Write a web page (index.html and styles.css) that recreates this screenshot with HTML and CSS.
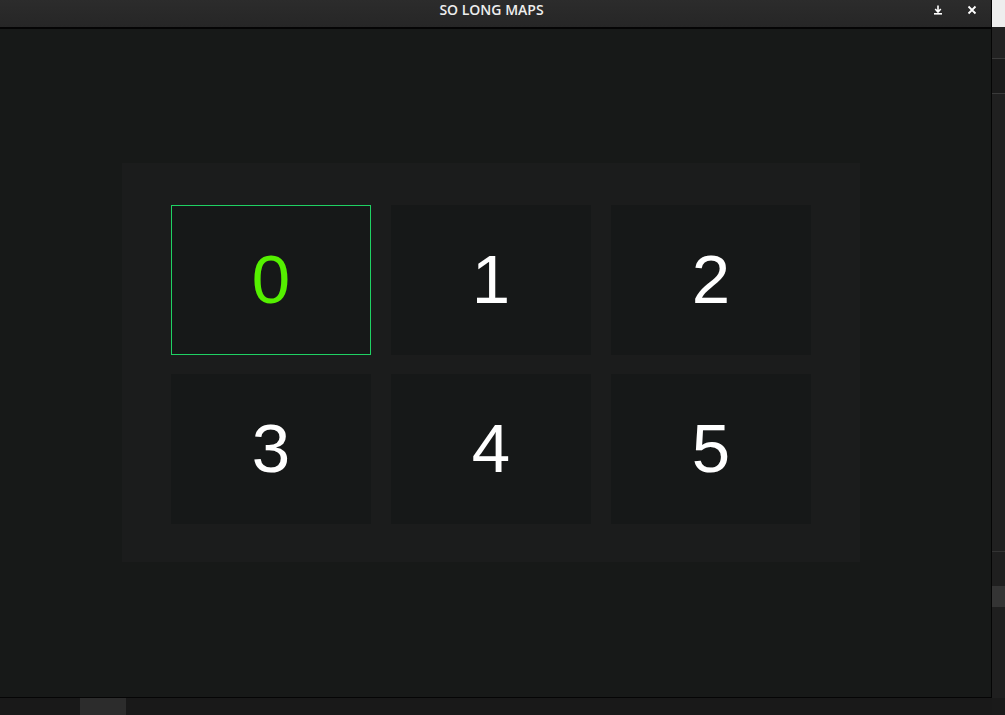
FILE: index.html
```html
<!DOCTYPE html>
<html>
<head>
<meta charset="utf-8">
<title>SO LONG MAPS</title>
<link rel="stylesheet" href="styles.css">
</head>
<body>
<div class="desktop">
  <div class="window">
    <div class="titlebar">
      <div class="title">SO LONG MAPS</div>
      <div class="controls">
        <svg class="ctl" width="10" height="10" viewBox="0 0 10 10"><path d="M5 0.5V6.5M2.2 4L5 7 7.8 4" fill="none" stroke="#fff" stroke-width="1.6"/><rect x="1" y="8" width="8" height="1.6" fill="#fff"/></svg>
        <svg class="ctl" width="10" height="10" viewBox="0 0 10 10"><path d="M1.5 1.5L8.5 8.5M8.5 1.5L1.5 8.5" stroke="#fff" stroke-width="1.8"/></svg>
      </div>
    </div>
    <div class="content">
      <div class="panel">
        <div class="cell selected">0</div>
        <div class="cell">1</div>
        <div class="cell">2</div>
        <div class="cell">3</div>
        <div class="cell">4</div>
        <div class="cell">5</div>
      </div>
    </div>
  </div>
  <div class="side">
    <div class="side-top"></div>
    <div class="side-a"></div>
    <div class="side-b"></div>
    <div class="side-c"></div>
    <div class="side-d"></div>
    <div class="side-e"></div>
  </div>
  <div class="bottom">
    <div class="bottom-tab"></div>
  </div>
  <div class="corner"></div>
</div>
</body>
</html>
```

FILE: styles.css
```css
html, body {
  margin: 0;
  padding: 0;
  background: #1a1a1a;
}
.desktop {
  width: 1005px;
  height: 715px;
  overflow: hidden;
  display: grid;
  grid-template-columns: 992px 13px;
  grid-template-rows: 698px 17px;
}
.window {
  display: flex;
  flex-direction: column;
  border-right: 1px solid #050505;
  border-bottom: 1px solid #050505;
  background: #171918;
}
.titlebar {
  height: 27px;
  border-bottom: 2px solid #050505;
  background: linear-gradient(#2c2c2c, #262626);
  display: flex;
  align-items: center;
  position: relative;
}
.title {
  flex: 1;
  text-align: center;
  padding-right: 8px;
  color: #eeeeee;
  font-family: "Open Sans", "Noto Sans", sans-serif;
  font-weight: 600;
  font-size: 14px;
  letter-spacing: 0;
  line-height: 20px;
  margin-top: -8px;
}
.controls {
  position: absolute;
  right: 14px;
  top: 5px;
  display: flex;
  gap: 24px;
}
.ctl { display: block; }
.content {
  flex: 1;
  padding: 134px 0 0 122px;
}
.panel {
  width: 738px;
  box-sizing: border-box;
  padding: 42px 49px 38px 49px;
  background: #1b1c1c;
  display: grid;
  grid-template-columns: repeat(3, 200px);
  grid-auto-rows: 150px;
  column-gap: 20px;
  row-gap: 19px;
}
.cell {
  background: #161818;
  box-sizing: border-box;
  display: flex;
  align-items: center;
  justify-content: center;
  color: #ffffff;
  font-family: "Liberation Sans", Arial, sans-serif;
  font-size: 69px;
  line-height: 1;
  padding-bottom: 2px;
}
.cell.selected {
  border: 1px solid #1fd163;
  color: #55f000;
}
.side {
  background: #1f1f1f;
  display: flex;
  flex-direction: column;
}
.side-top { height: 27px; background: #eeeeee; }
.side-a { height: 31px; background: #222222; border-bottom: 1px solid #3a3a3a; }
.side-b { height: 34px; background: #1b1b1b; border-bottom: 1px solid #3a3a3a; }
.side-c { height: 457px; background: #202020; border-bottom: 1px solid #333333; }
.side-d { height: 34px; background: #1f1f1f; }
.side-e { height: 21px; background: #343434; }
.bottom {
  background: #191919;
  padding-left: 80px;
}
.bottom-tab {
  width: 46px;
  height: 100%;
  background: #2c2c2c;
}
.corner { background: #1a1a1a; }
```
